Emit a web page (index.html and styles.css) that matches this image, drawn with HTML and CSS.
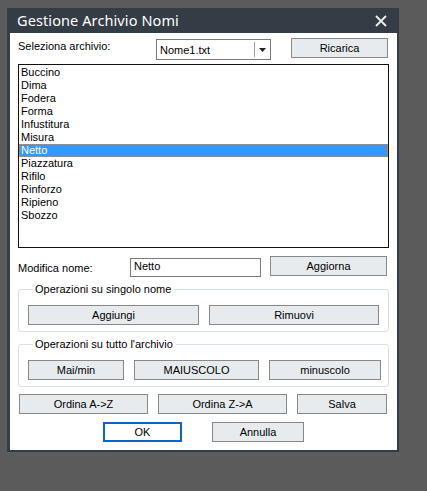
FILE: index.html
```html
<!DOCTYPE html>
<html lang="it">
<head>
<meta charset="utf-8">
<title>Gestione Archivio Nomi</title>
<link rel="stylesheet" href="styles.css">
</head>
<body>
<div class="win">
  <div class="titlebar">
    <span class="title">Gestione Archivio Nomi</span>
    <svg class="close" width="12" height="12" viewBox="0 0 12 12"><path d="M1 1 L11 11 M11 1 L1 11" stroke="#f0f0f0" stroke-width="1.8" fill="none"/></svg>
  </div>
  <div class="client">
    <div class="row r1">
      <span class="lbl lbl-file">Seleziona archivio:</span>
      <div class="combo">
        <span class="combo-text">Nome1.txt</span>
        <span class="combo-btn"><svg width="7" height="4" viewBox="0 0 7 4"><path d="M0 0 H7 L3.5 4 Z" fill="#222"/></svg></span>
      </div>
      <button class="btn w-ricarica">Ricarica</button>
    </div>
    <ul class="list">
      <li>Buccino</li>
      <li>Dima</li>
      <li>Fodera</li>
      <li>Forma</li>
      <li>Infustitura</li>
      <li>Misura</li>
      <li class="sel">Netto</li>
      <li>Piazzatura</li>
      <li>Rifilo</li>
      <li>Rinforzo</li>
      <li>Ripieno</li>
      <li>Sbozzo</li>
    </ul>
    <div class="row r2">
      <span class="lbl lbl-name">Modifica nome:</span>
      <div class="textbox">Netto</div>
      <button class="btn w-aggiorna">Aggiorna</button>
    </div>
    <fieldset class="group g1">
      <legend>Operazioni su singolo nome</legend>
      <div class="grow">
        <button class="btn w-aggiungi">Aggiungi</button>
        <button class="btn w-rimuovi">Rimuovi</button>
      </div>
    </fieldset>
    <fieldset class="group g2">
      <legend>Operazioni su tutto l'archivio</legend>
      <div class="grow">
        <button class="btn w-maimin">Mai/min</button>
        <button class="btn w-maiusc">MAIUSCOLO</button>
        <button class="btn w-minusc">minuscolo</button>
      </div>
    </fieldset>
    <div class="row r3">
      <button class="btn w-ordina">Ordina A-&gt;Z</button>
      <button class="btn w-ordina">Ordina Z-&gt;A</button>
      <button class="btn w-salva">Salva</button>
    </div>
    <div class="row r4">
      <button class="btn default w-ok">OK</button>
      <button class="btn w-annulla">Annulla</button>
    </div>
  </div>
</div>
</body>
</html>
```
FILE: styles.css
```css
* { box-sizing: border-box; }
html, body { margin: 0; padding: 0; }
body {
  background: #5b5b5b;
  width: 427px;
  height: 491px;
  overflow: hidden;
  font-family: "Liberation Sans", Arial, sans-serif;
  font-size: 11px;
  color: #000;
}
.win {
  margin: 8px 0 0 7px;
  width: 392px;
  height: 444px;
  background: #343c46;
  display: flex;
  flex-direction: column;
  padding: 0 2px 2px 3px;
}
.titlebar {
  height: 25px;
  flex: none;
  display: flex;
  align-items: center;
  justify-content: space-between;
  padding: 0 10px 0 7px;
}
.title {
  font-family: "Noto Sans", "Open Sans", sans-serif;
  font-size: 14.5px;
  color: #ffffff;
  letter-spacing: 0.1px;
  margin-top: -1px;
}
.client {
  flex: 1;
  background: #ffffff;
  display: flex;
  flex-direction: column;
  padding: 5px 0 0 8px;
}
.row { display: flex; align-items: flex-start; }
.lbl { line-height: 13px; white-space: nowrap; }
.lbl-file { width: 138px; margin-top: 2px; }
.combo {
  margin-top: 1px;
  width: 115px;
  height: 21px;
  border: 1px solid #7a7a7a;
  display: flex;
  background: #fff;
}
.combo-text { flex: 1; padding: 4px 0 0 3px; line-height: 13px; }
.combo-btn {
  width: 16px;
  border-left: 1px solid #a0a0a0;
  margin: 2px 0;
  display: flex;
  align-items: center;
  justify-content: center;
  padding-top: 1px;
}
.btn {
  font-family: "Liberation Sans", Arial, sans-serif;
  font-size: 11px;
  color: #000;
  background: #e8ebee;
  border: 1px solid #888;
  height: 20px;
  padding: 0;
  line-height: 16px;
  text-align: center;
  border-radius: 0;
}
.btn.default { background: #fff; border: 2px solid #0a64c6; }
.w-ricarica { width: 97px; margin-left: 20px; }
.list {
  list-style: none;
  margin: 4px 0 0 0;
  padding: 1px 0 0 0;
  width: 371px;
  height: 184px;
  border: 1px solid #111;
}
.list li { height: 13px; line-height: 13px; padding: 0 0 0 2px; }
.list li.sel {
  background: #3399ff;
  color: #fff;
  outline: 1px dotted #d08a3c;
  outline-offset: -1px;
}
.r2 { margin-top: 8px; }
.lbl-name { width: 112px; margin-top: 6px; }
.textbox {
  margin-top: 2px;
  width: 131px;
  height: 19px;
  border: 1px solid #7a7a7a;
  padding: 1px 0 0 3px;
  line-height: 13px;
}
.w-aggiorna { width: 117px; margin-left: 9px; }
.group {
  margin: 0;
  width: 371px;
  border: 1px solid #d9e1e7;
  border-radius: 3px;
  padding: 0 0 6px 9px;
  min-inline-size: 0;
}
.group legend {
  margin-left: 5px;
  padding: 0 3px 0 2px;
  line-height: 13px;
  font-size: 11px;
}
.g1 { margin-top: 6px; }
.g2 { margin-top: 6px; }
.grow { display: flex; gap: 10px; margin-top: 9px; }
.w-aggiungi { width: 171px; }
.w-rimuovi { width: 170px; }
.w-maimin { width: 96px; }
.w-maiusc { width: 125px; }
.w-minusc { width: 112px; }
.r3 { margin-top: 7px; gap: 10px; padding-left: 1px; }
.w-ordina { width: 129px; }
.w-salva { width: 90px; }
.r4 { margin-top: 8px; gap: 30px; padding-left: 85px; }
.w-ok { width: 79px; }
.w-annulla { width: 92px; }
```
